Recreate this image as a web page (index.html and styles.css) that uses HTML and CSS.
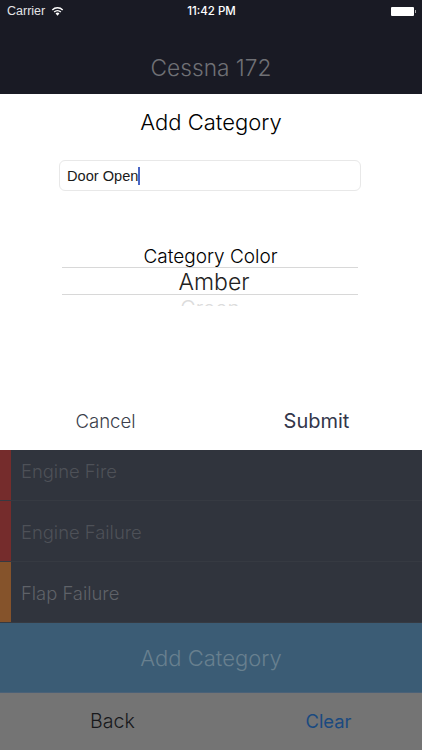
FILE: index.html
```html
<!DOCTYPE html>
<html lang="en">
<head>
  <meta charset="UTF-8" />
  <meta name="viewport" content="width=device-width, initial-scale=1.0"/>
  <title>Add Category</title>
  <link rel="stylesheet" href="styles.css">
</head>
<body>
  <!-- Header with status bar -->
  <header class="header">
    <div class="status-bar">
      <div class="status-left">
        <span>Carrier</span>
        <svg class="wifi" viewBox="0 0 14 10" width="13" height="10">
          <path d="M7 10 L4.9 7.7 A3 3 0 0 1 9.1 7.7 Z" fill="#fff"/>
          <path d="M3.4 6.1 A5.2 5.2 0 0 1 10.6 6.1" fill="none" stroke="#fff" stroke-width="1.5"/>
          <path d="M1.4 3.8 A8 8 0 0 1 12.6 3.8" fill="none" stroke="#fff" stroke-width="1.5"/>
        </svg>
      </div>
      <div class="status-time">11:42 PM</div>
      <div class="battery"><div class="battery-body"></div><div class="battery-tip"></div></div>
    </div>
    <h1 class="title">Cessna 172</h1>
  </header>

  <!-- Add Category modal -->
  <section class="modal">
    <h2 class="modal-title">Add Category</h2>
    <div class="text-field">Door Open<span class="caret"></span></div>
    <div class="picker">
      <div class="picker-label">Category Color</div>
      <div class="picker-selected">Amber</div>
      <div class="picker-next">Green</div>
    </div>
    <div class="modal-actions">
      <span class="cancel">Cancel</span>
      <span class="submit">Submit</span>
    </div>
  </section>

  <!-- Category list behind the modal -->
  <div class="row row-first"><div class="swatch red"></div><div class="row-label">Engine Fire</div></div>
  <div class="row"><div class="swatch red"></div><div class="row-label">Engine Failure</div></div>
  <div class="row"><div class="swatch orange"></div><div class="row-label flap">Flap Failure</div></div>

  <div class="add-button">Add Category</div>

  <div class="bottom-bar">
    <span class="back">Back</span>
    <span class="clear">Clear</span>
  </div>
</body>
</html>
```

FILE: styles.css
```css
* {
  box-sizing: border-box;
}

body {
  font-family: 'Inter', 'Liberation Sans', sans-serif;
  font-weight: 300;
  margin: 0;
  width: 422px;
  height: 750px;
  overflow: hidden;
  display: flex;
  flex-direction: column;
  background: #30343d;
}

/* Header */
.header {
  height: 94px;
  background: #191a24;
  color: #fff;
}

.status-bar {
  height: 22px;
  padding: 0 6px 0 7px;
  display: grid;
  grid-template-columns: 1fr auto 1fr;
  align-items: center;
  font-family: 'Liberation Sans', sans-serif;
  font-weight: 400;
  font-size: 12.5px;
}

.status-left {
  display: flex;
  align-items: center;
  gap: 6px;
  color: #e4e4e6;
}

.status-time {
  font-family: 'Inter', sans-serif;
  font-weight: 500;
  font-size: 11.5px;
}

.battery {
  justify-self: end;
  display: flex;
  align-items: center;
  gap: 1px;
}

.battery-body {
  width: 23px;
  height: 9px;
  background: #fff;
  border-radius: 1px;
}

.battery-tip {
  width: 1px;
  height: 3px;
  background: #aaa;
}

.title {
  margin: 32px 0 0;
  text-align: center;
  font-size: 22.7px;
  line-height: 28px;
  font-weight: 300;
  color: #6f7075;
}

/* Modal */
.modal {
  height: 356px;
  background: #fff;
  display: flex;
  flex-direction: column;
  align-items: center;
  color: #000;
}

.modal-title {
  margin: 14px 0 0;
  font-size: 22px;
  line-height: 28px;
  font-weight: 300;
  color: #000;
}

.text-field {
  margin: 24px 2px 0 0;
  width: 302px;
  height: 31px;
  padding: 0 7px;
  border: 1px solid #e8e8e8;
  border-radius: 6px;
  display: flex;
  align-items: center;
  font-family: 'Liberation Sans', sans-serif;
  font-weight: 400;
  font-size: 14.6px;
  color: #1a1a1a;
}

.caret {
  width: 2px;
  height: 18px;
  background: #4a66c4;
}

.picker {
  position: relative;
  margin: 76px 2px 0 0;
  width: 296px;
  height: 28px;
  border-top: 1px solid #d8d8d8;
  border-bottom: 1px solid #d8d8d8;
  text-align: center;
}

.picker-label {
  position: absolute;
  left: 1px;
  right: 0;
  top: -23px;
  font-size: 19px;
  line-height: 24px;
  color: #000;
}

.picker-selected {
  font-size: 23px;
  line-height: 28px;
  color: #222;
  margin-left: 8px;
}

.picker-next {
  height: 10px;
  overflow: hidden;
  font-size: 21px;
  line-height: 26px;
  color: #dcdcdc;
}

.modal-actions {
  margin-top: auto;
  width: 100%;
  height: 58px;
  display: grid;
  grid-template-columns: 211px 211px;
  align-items: center;
  text-align: center;
  font-size: 20px;
  color: #3c3f4c;
}

.cancel {
  font-size: 18.6px;
}

.submit {
  font-weight: 400;
  color: #33364a;
}

/* List rows */
.row {
  height: 61px;
  display: flex;
  border-bottom: 1px solid #363a42;
  background: #30343d;
}

.row-first {
  height: 51px;
}

.row-first .row-label {
  margin-bottom: 10px;
}

.swatch {
  width: 11px;
}

.red {
  background: #752c2c;
}

.orange {
  background: #85532b;
}

.row-label {
  margin: 2px 0 0 10px;
  align-self: center;
  font-size: 18.4px;
  color: #4e5158;
}

.flap {
  color: #5f6268;
}

.add-button {
  height: 70px;
  background: #3b5c75;
  border-bottom: 1px solid #4a6178;
  display: flex;
  align-items: center;
  justify-content: center;
  font-size: 22px;
  color: #68808f;
}

.bottom-bar {
  flex: 1;
  display: grid;
  grid-template-columns: 225px 197px;
  align-items: center;
  padding-bottom: 2px;
  background: #747474;
  font-size: 19.6px;
  text-align: center;
}

.back {
  color: #18191c;
}

.clear {
  padding-left: 10px;
  font-size: 18.4px;
  font-weight: 400;
  color: #1a4a80;
}
```
